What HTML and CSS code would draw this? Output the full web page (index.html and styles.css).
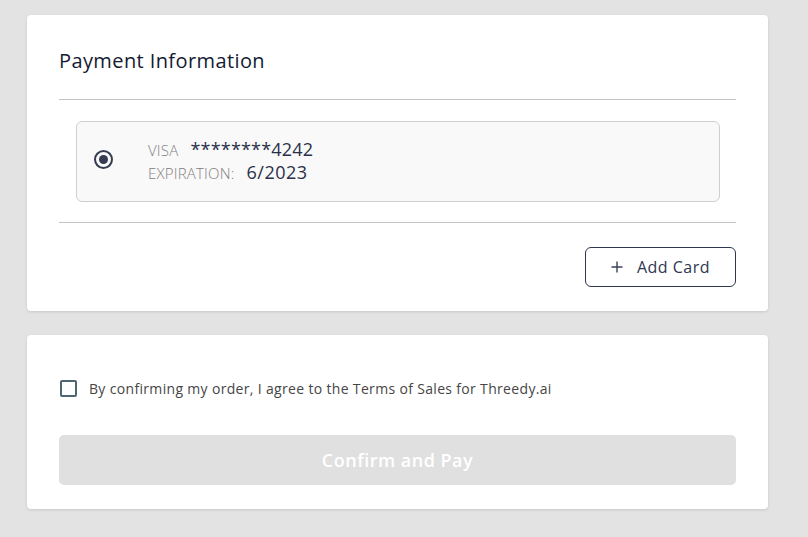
FILE: index.html
```html
<!DOCTYPE html>
<html>
<head>
<meta charset="utf-8">
<link rel="stylesheet" href="styles.css">
</head>
<body>
<div class="page">
  <section class="card card-payment">
    <h2 class="title">Payment Information</h2>
    <hr class="divider">
    <div class="saved-card">
      <span class="radio"><span class="radio-dot"></span></span>
      <div class="card-info">
        <div class="info-line"><span class="label">VISA</span><span class="value value-num">********4242</span></div>
        <div class="info-line"><span class="label">EXPIRATION:</span><span class="value value-exp">6/2023</span></div>
      </div>
    </div>
    <hr class="divider divider-bottom">
    <div class="actions">
      <button class="add-card">
        <svg class="plus" width="12" height="12" viewBox="0 0 12 12"><path d="M6 0.5V11.5M0.5 6H11.5" stroke="#3a4155" stroke-width="1.4" fill="none"/></svg>
        <span>Add Card</span>
      </button>
    </div>
  </section>
  <section class="card card-confirm">
    <label class="agree">
      <span class="checkbox"></span>
      <span class="agree-text">By confirming my order, I agree to the Terms of Sales for Threedy.ai</span>
    </label>
    <button class="pay" disabled>Confirm and Pay</button>
  </section>
</div>
</body>
</html>
```
FILE: styles.css
```css
* { box-sizing: border-box; }
html, body { margin: 0; padding: 0; }
body {
  background: #e3e3e3;
  font-family: "Open Sans", "Noto Sans", sans-serif;
  width: 808px;
  height: 537px;
  overflow: hidden;
}
.page {
  padding: 15px 0 0 27px;
  display: flex;
  flex-direction: column;
  gap: 24px;
}
.card {
  width: 741px;
  background: #fff;
  border-radius: 4px;
  box-shadow: 0 1px 3px rgba(0,0,0,0.12);
}
.card-payment {
  padding: 31px 32px 24px;
}
.title {
  margin: 0;
  font-size: 20px;
  line-height: 30px;
  font-weight: 400;
  letter-spacing: 0.4px;
  color: #141a33;
}
.divider {
  border: 0;
  border-top: 1px solid #c4c4c4;
  margin: 23px 0 0;
  height: 0;
}
.divider-bottom { margin-top: 20px; }
.saved-card {
  margin: 21px 16px 0 17px;
  height: 81px;
  border: 1px solid #cfcfcf;
  border-radius: 6px;
  background: #f9f9f9;
  display: flex;
  align-items: center;
  padding-left: 17px;
}
.radio {
  width: 19px;
  height: 19px;
  border: 2px solid #353b52;
  border-radius: 50%;
  display: flex;
  align-items: center;
  justify-content: center;
  margin-top: -4px;
}
.radio-dot {
  width: 9px;
  height: 9px;
  border-radius: 50%;
  background: #353b52;
}
.card-info {
  margin-left: 35px;
  margin-top: -4px;
  display: flex;
  flex-direction: column;
}
.info-line {
  display: flex;
  align-items: baseline;
  height: 23px;
}
.label {
  font-size: 15px;
  color: #808080;
  font-weight: 300;
  letter-spacing: 0.2px;
}
.value {
  font-size: 18px;
  color: #2a3049;
  font-weight: 500;
}
.value-num { margin-left: 12px; letter-spacing: 0.2px; }
.value-exp { margin-left: 12px; letter-spacing: 0.5px; }
.actions {
  display: flex;
  justify-content: flex-end;
  margin-top: 24px;
}
.add-card {
  width: 151px;
  height: 40px;
  border: 1px solid #2f3650;
  border-radius: 6px;
  background: #fff;
  display: flex;
  align-items: center;
  justify-content: center;
  gap: 14px;
  font-family: inherit;
  font-size: 16px;
  letter-spacing: 0.5px;
  color: #2f3650;
  padding: 0;
}
.plus { display: block; }
.card-confirm {
  padding: 41px 32px 24px;
  display: flex;
  flex-direction: column;
}
.agree {
  display: flex;
  align-items: center;
  height: 24px;
  padding-left: 1px;
}
.checkbox {
  width: 17px;
  height: 17px;
  border: 2px solid #4e6572;
  border-radius: 2px;
}
.agree-text {
  margin-left: 12px;
  font-size: 14px;
  letter-spacing: 0.33px;
  color: #464646;
}
.pay {
  margin-top: 35px;
  height: 50px;
  border: 0;
  border-radius: 5px;
  background: #e0e0e0;
  color: #fff;
  font-family: inherit;
  font-size: 18px;
  letter-spacing: 0.5px;
  font-weight: 600;
}
```
